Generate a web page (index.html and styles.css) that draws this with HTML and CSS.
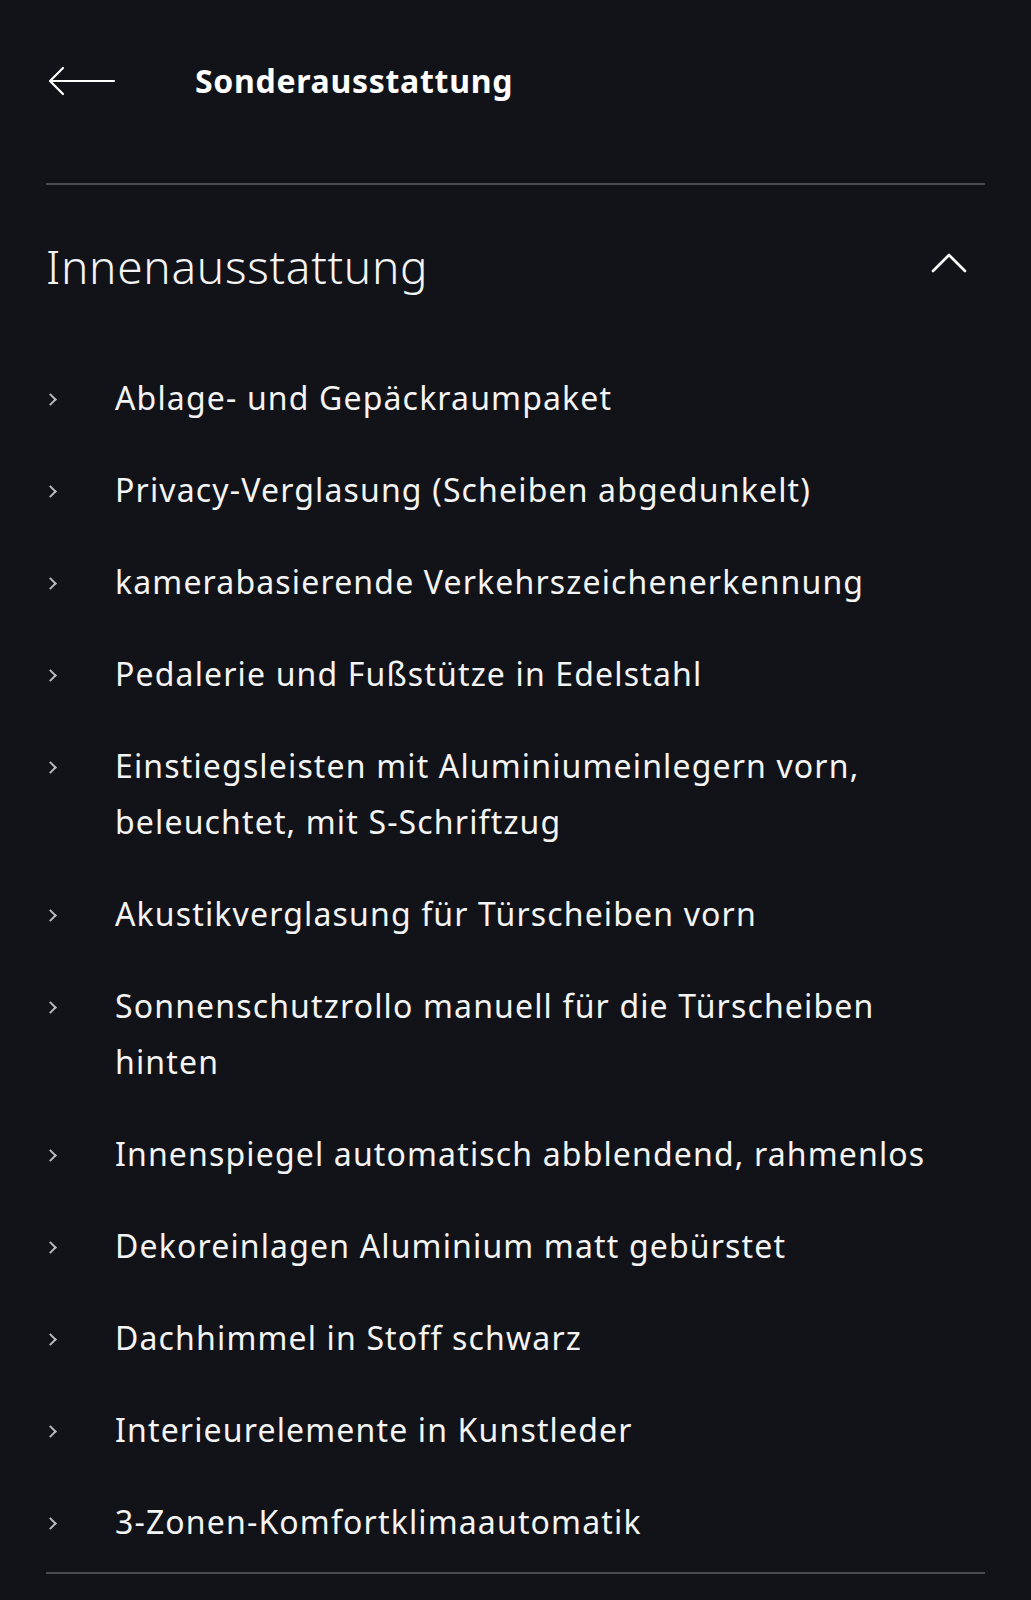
FILE: index.html
```html
<!DOCTYPE html>
<html lang="de">
<head>
  <meta charset="UTF-8">
  <title>Sonderausstattung</title>
  <link rel="stylesheet" href="styles.css">
</head>
<body>

  <div class="page">

    <!-- Top bar -->
    <header class="topbar">
      <button class="back" aria-label="Zurück">
        <svg width="68" height="30" viewBox="0 0 68 30">
          <path d="M66 15 H3 M15 2 L2 15 L15 28" fill="none" stroke="#fff" stroke-width="2.2" stroke-linecap="round" stroke-linejoin="round"/>
        </svg>
      </button>
      <h1 class="title">Sonderausstattung</h1>
    </header>

    <!-- Section -->
    <section class="section">
      <div class="section-head">
        <h2>Innenausstattung</h2>
        <svg class="toggle" width="36" height="20" viewBox="0 0 36 20">
          <path d="M2 18 L18 2 L34 18" fill="none" stroke="#fff" stroke-width="2.6" stroke-linecap="round" stroke-linejoin="round"/>
        </svg>
      </div>

      <ul class="items">
        <li><span class="arrow"></span><span class="label">Ablage- und Gepäckraumpaket</span></li>
        <li><span class="arrow"></span><span class="label">Privacy-Verglasung (Scheiben abgedunkelt)</span></li>
        <li><span class="arrow"></span><span class="label">kamerabasierende Verkehrszeichenerkennung</span></li>
        <li><span class="arrow"></span><span class="label">Pedalerie und Fußstütze in Edelstahl</span></li>
        <li><span class="arrow"></span><span class="label">Einstiegsleisten mit Aluminiumeinlegern vorn, beleuchtet, mit S-Schriftzug</span></li>
        <li><span class="arrow"></span><span class="label">Akustikverglasung für Türscheiben vorn</span></li>
        <li><span class="arrow"></span><span class="label">Sonnenschutzrollo manuell für die Türscheiben hinten</span></li>
        <li><span class="arrow"></span><span class="label">Innenspiegel automatisch abblendend, rahmenlos</span></li>
        <li><span class="arrow"></span><span class="label">Dekoreinlagen Aluminium matt gebürstet</span></li>
        <li><span class="arrow"></span><span class="label">Dachhimmel in Stoff schwarz</span></li>
        <li><span class="arrow"></span><span class="label">Interieurelemente in Kunstleder</span></li>
        <li><span class="arrow"></span><span class="label">3-Zonen-Komfortklimaautomatik</span></li>
      </ul>
    </section>

  </div>

</body>
</html>
```

FILE: styles.css
```css
* {
  box-sizing: border-box;
  margin: 0;
  padding: 0;
}

body {
  background: #121318;
  color: #f4f4f5;
  font-family: 'Noto Sans', 'Open Sans', sans-serif;
}

.page {
  padding: 0 46px;
}

/* Top bar */
.topbar {
  display: flex;
  align-items: center;
  height: 185px;
  padding-bottom: 22px;
  border-bottom: 2px solid #4a4b50;
}

.back {
  background: none;
  border: none;
  width: 149px;
  height: 30px;
  display: flex;
  align-items: center;
  padding-left: 2px;
}

.title {
  font-size: 32px;
  font-weight: 700;
  letter-spacing: 0.7px;
  color: #fff;
}

/* Section */
.section-head {
  display: flex;
  align-items: center;
  justify-content: space-between;
  padding: 49px 18px 0 0;
}

.section-head h2 {
  font-size: 46px;
  font-weight: 300;
  letter-spacing: 0.7px;
  line-height: 64px;
}

.toggle {
  margin-top: -6px;
}

.items {
  list-style: none;
  padding: 54px 0 4px;
  border-bottom: 2px solid #4a4b50;
}

.items li {
  display: flex;
  align-items: flex-start;
  padding: 18px 0;
  font-size: 32px;
  letter-spacing: 1.15px;
  line-height: 56px;
}

.arrow {
  width: 69px;
  flex-shrink: 0;
  height: 56px;
  position: relative;
}

.arrow::before {
  content: "";
  position: absolute;
  left: 0;
  top: 25px;
  width: 7px;
  height: 7px;
  border-top: 2px solid #b9babd;
  border-right: 2px solid #b9babd;
  transform: rotate(45deg);
}

.label {
  flex: 1;
  padding-right: 20px;
}
```
